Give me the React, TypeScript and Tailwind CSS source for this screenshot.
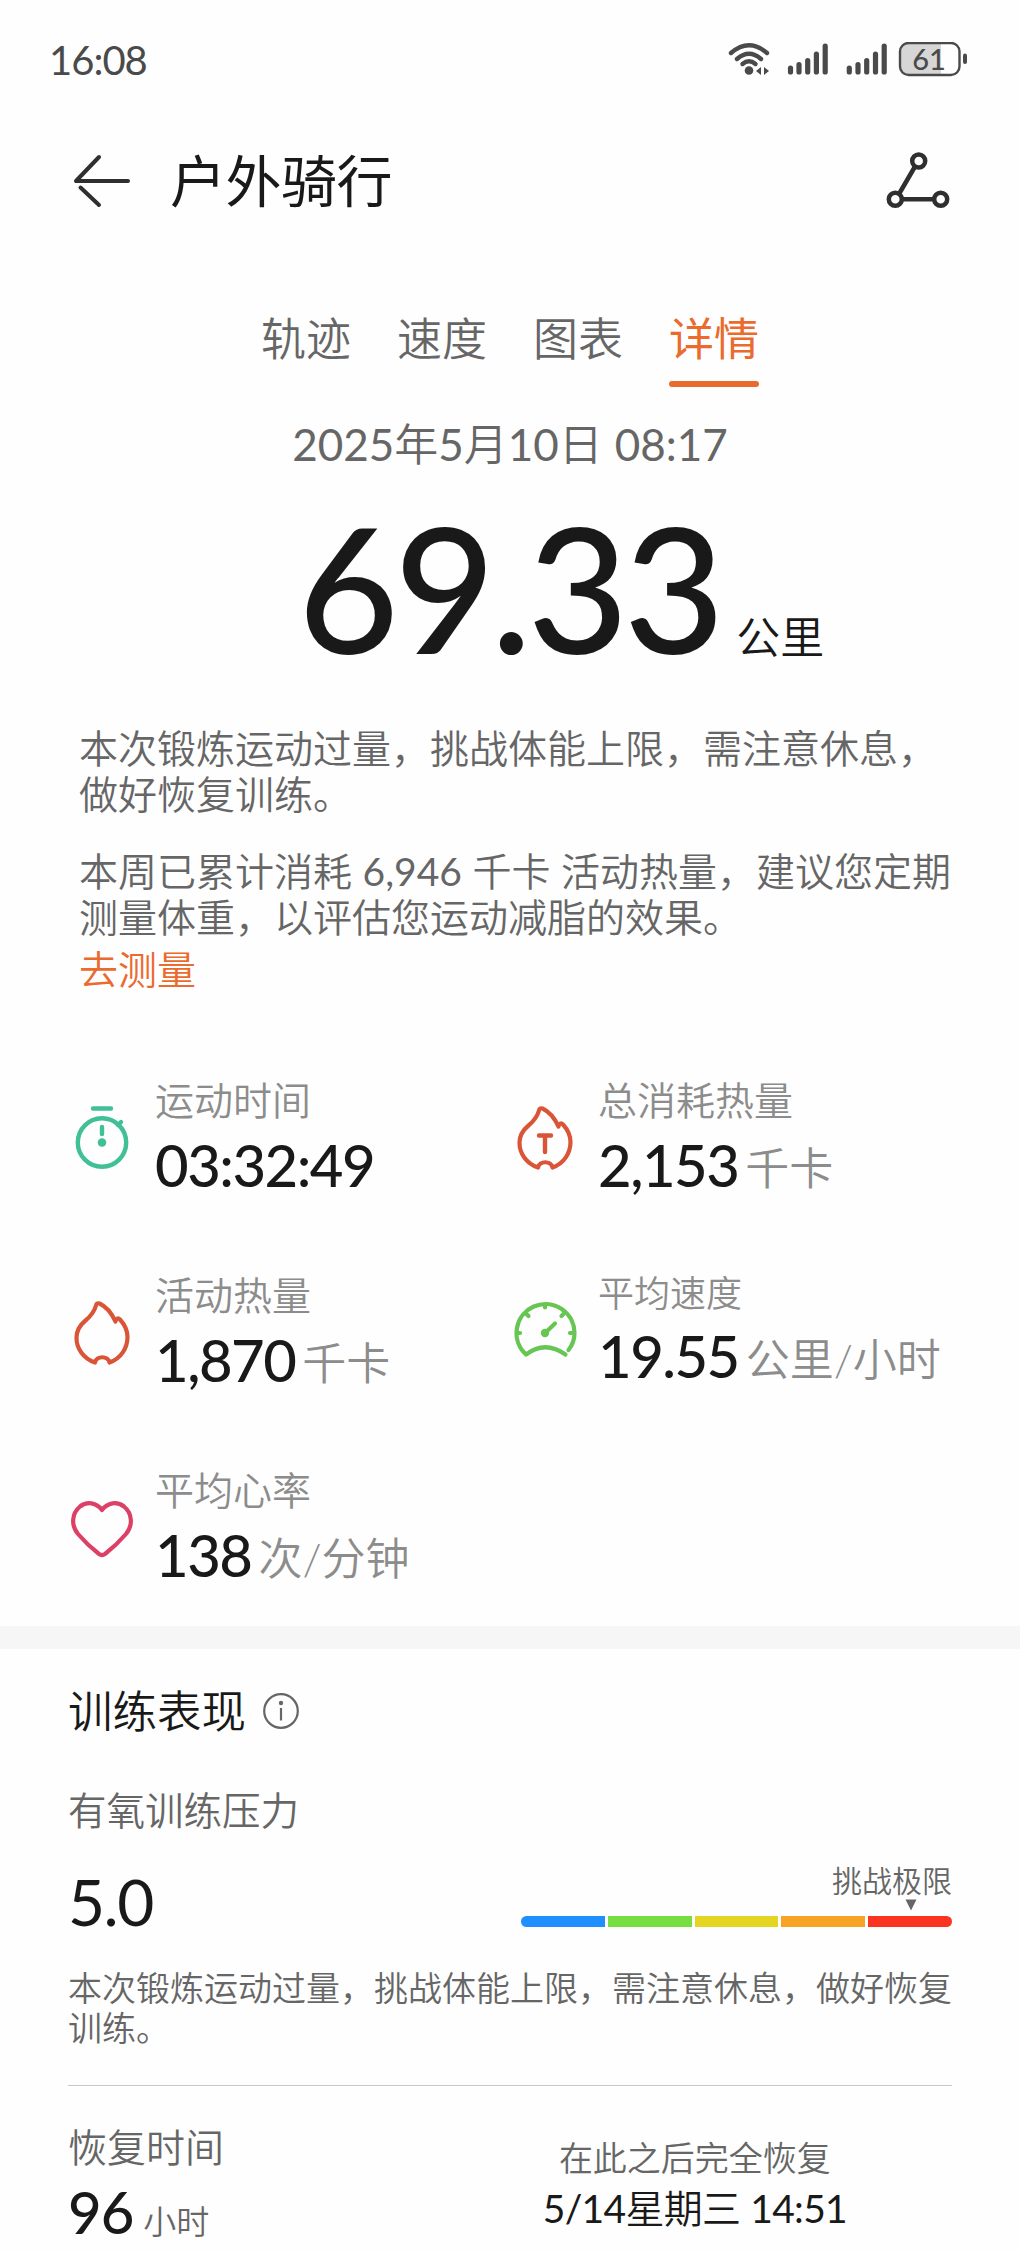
import { ReactNode } from 'react';

function StatusBar() {
  return (
    <div className="flex h-[120px] items-center justify-between pl-[49px] pr-[52px] text-[#4a4a4a]">
      <span className="text-[40px] font-normal leading-none tracking-[-1px]">16:08</span>
      <svg width="240" height="36" viewBox="728 42 240 36" fill="none" stroke="#4a4a4a">
        <g strokeWidth="4.4" strokeLinecap="round">
          <path d="M731 53 Q749 37.500 767 53" />
          <path d="M737 59 Q749 48.500 761 59" />
          <path d="M742.500 64 Q749 58.500 755.500 64" />
        </g>
        <circle cx="749" cy="70.500" r="4.300" fill="#4a4a4a" stroke="none" />
        <path d="M756 71l5-4v8zM769 71l-5-4v8z" fill="#4a4a4a" stroke="none" />
        <g strokeWidth="5.200" strokeLinecap="round">
          <path d="M790.500 68v4M799 64.500v7.500M807.700 60.500v11.500M816.400 54v18M825.200 46v26" />
          <path d="M849.300 68v4M858 64.500v7.500M866.700 60.500v11.500M875.500 54v18M884.200 46v26" />
        </g>
        <path d="M908 44h33v30h-33q-7 0-7-7V51q0-7 7-7z" fill="#d6d6d6" stroke="none" />
        <rect x="900" y="43" width="59.500" height="32" rx="8.500" strokeWidth="2.400" />
        <path d="M965 55.500v6.500" strokeWidth="4" strokeLinecap="round" />
        <text x="929" y="69.500" textAnchor="middle" fontSize="29" className="font-medium" fill="#4a4a4a" stroke="none">61</text>
      </svg>
    </div>
  );
}

function Header() {
  return (
    <header className="flex h-[122px] items-center pl-[72px] pr-[68px]">
      <svg width="60" height="60" viewBox="0 0 60 60" fill="none" stroke="#2f2f2f" strokeWidth="4" strokeLinecap="round" strokeLinejoin="round">
        <path d="M27 6L4 30H56M8.500 36.500L27 54" />
      </svg>
      <h1 className="ml-[38px] flex-1 text-[56px] font-normal leading-none tracking-[-0.5px] text-[#191919]">户外骑行</h1>
      <svg width="66" height="66" viewBox="886 148 66 66" fill="none" stroke="#2f2f2f" strokeWidth="4.500">
        <path d="M915 166.500L899 194M902 199.300H934" />
        <circle cx="918.700" cy="161" r="6.500" />
        <circle cx="895.300" cy="199.300" r="6.500" />
        <circle cx="940.700" cy="199.300" r="6.500" />
      </svg>
    </header>
  );
}

const tabs = ['轨迹', '速度', '图表', '详情'];

function Tabs() {
  return (
    <nav className="flex justify-center gap-[46px] pt-[66px]">
      {tabs.map(t => (
        <div key={t} className={t === '详情' ? 'font-normal text-[#eb6a2e]' : 'text-[#666]'}>
          <div className="h-[62px] text-[45px] leading-[62px]">{t}</div>
          <div className={t === '详情' ? 'mt-[11px] h-[6px] rounded-full bg-[#eb6a2e]' : 'mt-[11px] h-[6px]'} />
        </div>
      ))}
    </nav>
  );
}

function StopwatchIcon() {
  return (
    <svg width="68" height="68" viewBox="0 0 68 68" fill="none" stroke="#41bf97" strokeWidth="4.400" strokeLinecap="round">
      <path d="M25 3.500H43M34 22V29M50 20L53 17" />
      <circle cx="34" cy="37.500" r="24.200" />
      <circle cx="34" cy="37.500" r="4.300" fill="#41bf97" stroke="none" />
    </svg>
  );
}

function FlameIcon({ total }: { total?: boolean }) {
  return (
    <svg width="68" height="68" viewBox="0 0 68 68" fill="none" stroke="#da5438" strokeWidth="4.200" strokeLinecap="round" strokeLinejoin="round">
      <path d="M31.500 3.500C37 6 43.500 13 47.500 21.500C48 18.500 50 17.500 52 19.500C57 25 59.500 31 59.500 37C59.500 48 53 58.500 41.500 62.500C40 55.500 28.500 55.500 27 62.500C15 58.500 8.500 48 8.500 38C8.500 30 12 25 17.500 20.500C23.500 15.500 26.500 11 28 5.500Q28.500 2.500 31.500 3.500Z" />
      {total && <path d="M28 30.500H40M34 30.500V47" strokeWidth="4.400" />}
    </svg>
  );
}

function GaugeIcon() {
  return (
    <svg className="-mt-1" width="68" height="68" viewBox="0 0 68 68" fill="none" stroke="#67c653" strokeWidth="4.200" strokeLinecap="round" strokeLinejoin="round">
      <path d="M57.500 54C61.500 49 63.500 43 63.500 37A29 29 0 1 0 15 58.500Q34 44 54.500 58.500" />
      <path d="M34 9V11.500M15.500 18L17.500 20M52.500 18L50.500 20M7 37H9M61 37H59" />
      <path d="M34 37L44 27.500" />
      <circle cx="34" cy="37" r="4.200" fill="#67c653" stroke="none" />
    </svg>
  );
}

function HeartIcon() {
  return (
    <svg width="68" height="68" viewBox="0 0 68 68" fill="none" stroke="#dc4067" strokeWidth="4.200" strokeLinecap="round" strokeLinejoin="round">
      <path d="M34 15C28.500 7.500 19 6 12 11.500C3.500 18.500 3 30.500 10 39Q19 49.500 31 59Q34 61 37 59Q49 49.500 58 39C65 30.500 64.500 18.500 56 11.500C49 6 39.500 7.500 34 15Z" />
    </svg>
  );
}

interface StatProps {
  icon: ReactNode;
  label: string;
  value: string;
  unit?: string;
  compact?: boolean;
}

function Stat({ icon, label, value, unit, compact }: StatProps) {
  return (
    <div className="flex h-[195px]">
      <div className="mt-[27px] h-[68px] w-[68px] shrink-0">{icon}</div>
      <div className="ml-[19px] whitespace-nowrap">
        <div className={compact ? 'h-[39px] text-[36px] leading-[40px] text-[#8c8c8c]' : 'h-[43px] text-[39px] leading-[44px] text-[#8c8c8c]'}>{label}</div>
        <div className="flex h-[88px] items-baseline leading-[88px]">
          <span className="text-[58px] font-medium tracking-[-1.5px] text-[#191919]">{value}</span>
          {unit && <span className="ml-[7px] -translate-y-[2px] text-[44px] text-[#8c8c8c]">{unit}</span>}
        </div>
      </div>
    </div>
  );
}

const levels = [
  'rounded-l-full bg-[#1f8fff]',
  'bg-[#76de40]',
  'bg-[#e5d523]',
  'bg-[#f7a426]',
  'rounded-r-full bg-[#fb3321]',
];

export default function App() {
  return (
    <div className="h-[2250px] w-[1020px] overflow-hidden bg-[#fefefe] font-[Lato,'Noto_Sans_CJK_SC',sans-serif] font-[350]" lang="zh-CN">
      <StatusBar />
      <Header />
      <Tabs />

      <p className="mt-[27px] text-center text-[44px] leading-[60px] text-[#666]">
        <span className="font-normal">2025</span>年<span className="font-normal">5</span>月<span className="font-normal">10</span>日 <span className="font-normal">08:17</span>
      </p>
      <div className="mt-[13px] flex h-[200px] items-baseline pl-[298px] leading-[200px] text-[#191919]">
        <span className="text-[174px] font-medium tracking-[-4.500px]">69.33</span>
        <span className="ml-[16px] text-[44px]">公里</span>
      </div>

      <div className="mt-[38px] whitespace-nowrap pl-[79px] text-[39px] leading-[46px] text-[#666]">
        <p>本次锻炼运动过量，挑战体能上限，需注意休息，<br />做好恢复训练。</p>
        <p className="mt-[31px]">本周已累计消耗 <span className="font-normal">6,946</span> 千卡 活动热量，建议您定期<br />测量体重，以评估您运动减脂的效果。</p>
        <p className="mt-[6px] text-[#eb6a2e]">去测量</p>
      </div>

      <div className="mt-[86px] grid h-[548px] grid-cols-[443px_1fr] pl-[68px]">
        <Stat icon={<StopwatchIcon />} label="运动时间" value="03:32:49" />
        <Stat icon={<FlameIcon total />} label="总消耗热量" value="2,153" unit="千卡" />
        <Stat icon={<FlameIcon />} label="活动热量" value="1,870" unit="千卡" />
        <Stat icon={<GaugeIcon />} label="平均速度" value="19.55" unit="公里/小时" compact />
        <Stat icon={<HeartIcon />} label="平均心率" value="138" unit="次/分钟" />
      </div>

      <div className="h-[23px] bg-[#f6f6f6]" />

      <section className="px-[68px] pt-[32px]">
        <div className="flex h-[60px] items-center">
          <h2 className="text-[44.500px] leading-[60px] text-[#191919]">训练表现</h2>
          <svg className="ml-[16px]" width="38" height="38" viewBox="0 0 38 38" fill="none" stroke="#666" strokeWidth="2.200">
            <circle cx="19" cy="19" r="16.800" />
            <path d="M19 16V28.500" />
            <circle cx="19" cy="11" r="2.200" fill="#666" stroke="none" />
          </svg>
        </div>
        <p className="mt-[44px] text-[38.500px] leading-[50px] text-[#666]">有氧训练压力</p>
        <div className="mt-[26px] flex h-[86px] justify-between">
          <span className="text-[64px] leading-[82px] tracking-[-1.500px] text-[#191919] font-normal">5.0</span>
          <div className="w-[431px]">
            <div className="mt-[1px] text-right text-[30px] leading-[36px] text-[#666]">挑战极限</div>
            <svg className="ml-[384px] mt-[1px]" width="12" height="12" viewBox="0 0 12 12">
              <path d="M0.500 0.500H11.500L6 11.500Z" fill="#666" />
            </svg>
            <div className="mt-[5px] flex h-[11px] gap-[3px]">
              {levels.map(c => <div key={c} className={`flex-1 ${c}`} />)}
            </div>
          </div>
        </div>
        <p className="mt-[21px] whitespace-nowrap text-[34px] leading-[40px] text-[#666]">本次锻炼运动过量，挑战体能上限，需注意休息，做好恢复<br />训练。</p>
        <div className="mt-[37px] h-px bg-[#c8c8c8]" />
        <div className="flex justify-between">
          <div>
            <p className="mt-[36px] text-[39px] leading-[50px] text-[#666]">恢复时间</p>
            <div className="flex items-baseline leading-[80px]">
              <span className="text-[58px] font-medium tracking-[-1px] text-[#191919]">96</span>
              <span className="ml-[10px] text-[33px] text-[#666]">小时</span>
            </div>
          </div>
          <div className="mr-[105px] mt-[49px] text-center">
            <p className="text-[34px] leading-[46px] text-[#666]">在此之后完全恢复</p>
            <p className="text-[39px] leading-[54px] tracking-[-0.700px] text-[#191919]">
              <span className="font-normal">5/14</span>星期三 <span className="font-normal">14:51</span>
            </p>
          </div>
        </div>
      </section>
    </div>
  );
}
